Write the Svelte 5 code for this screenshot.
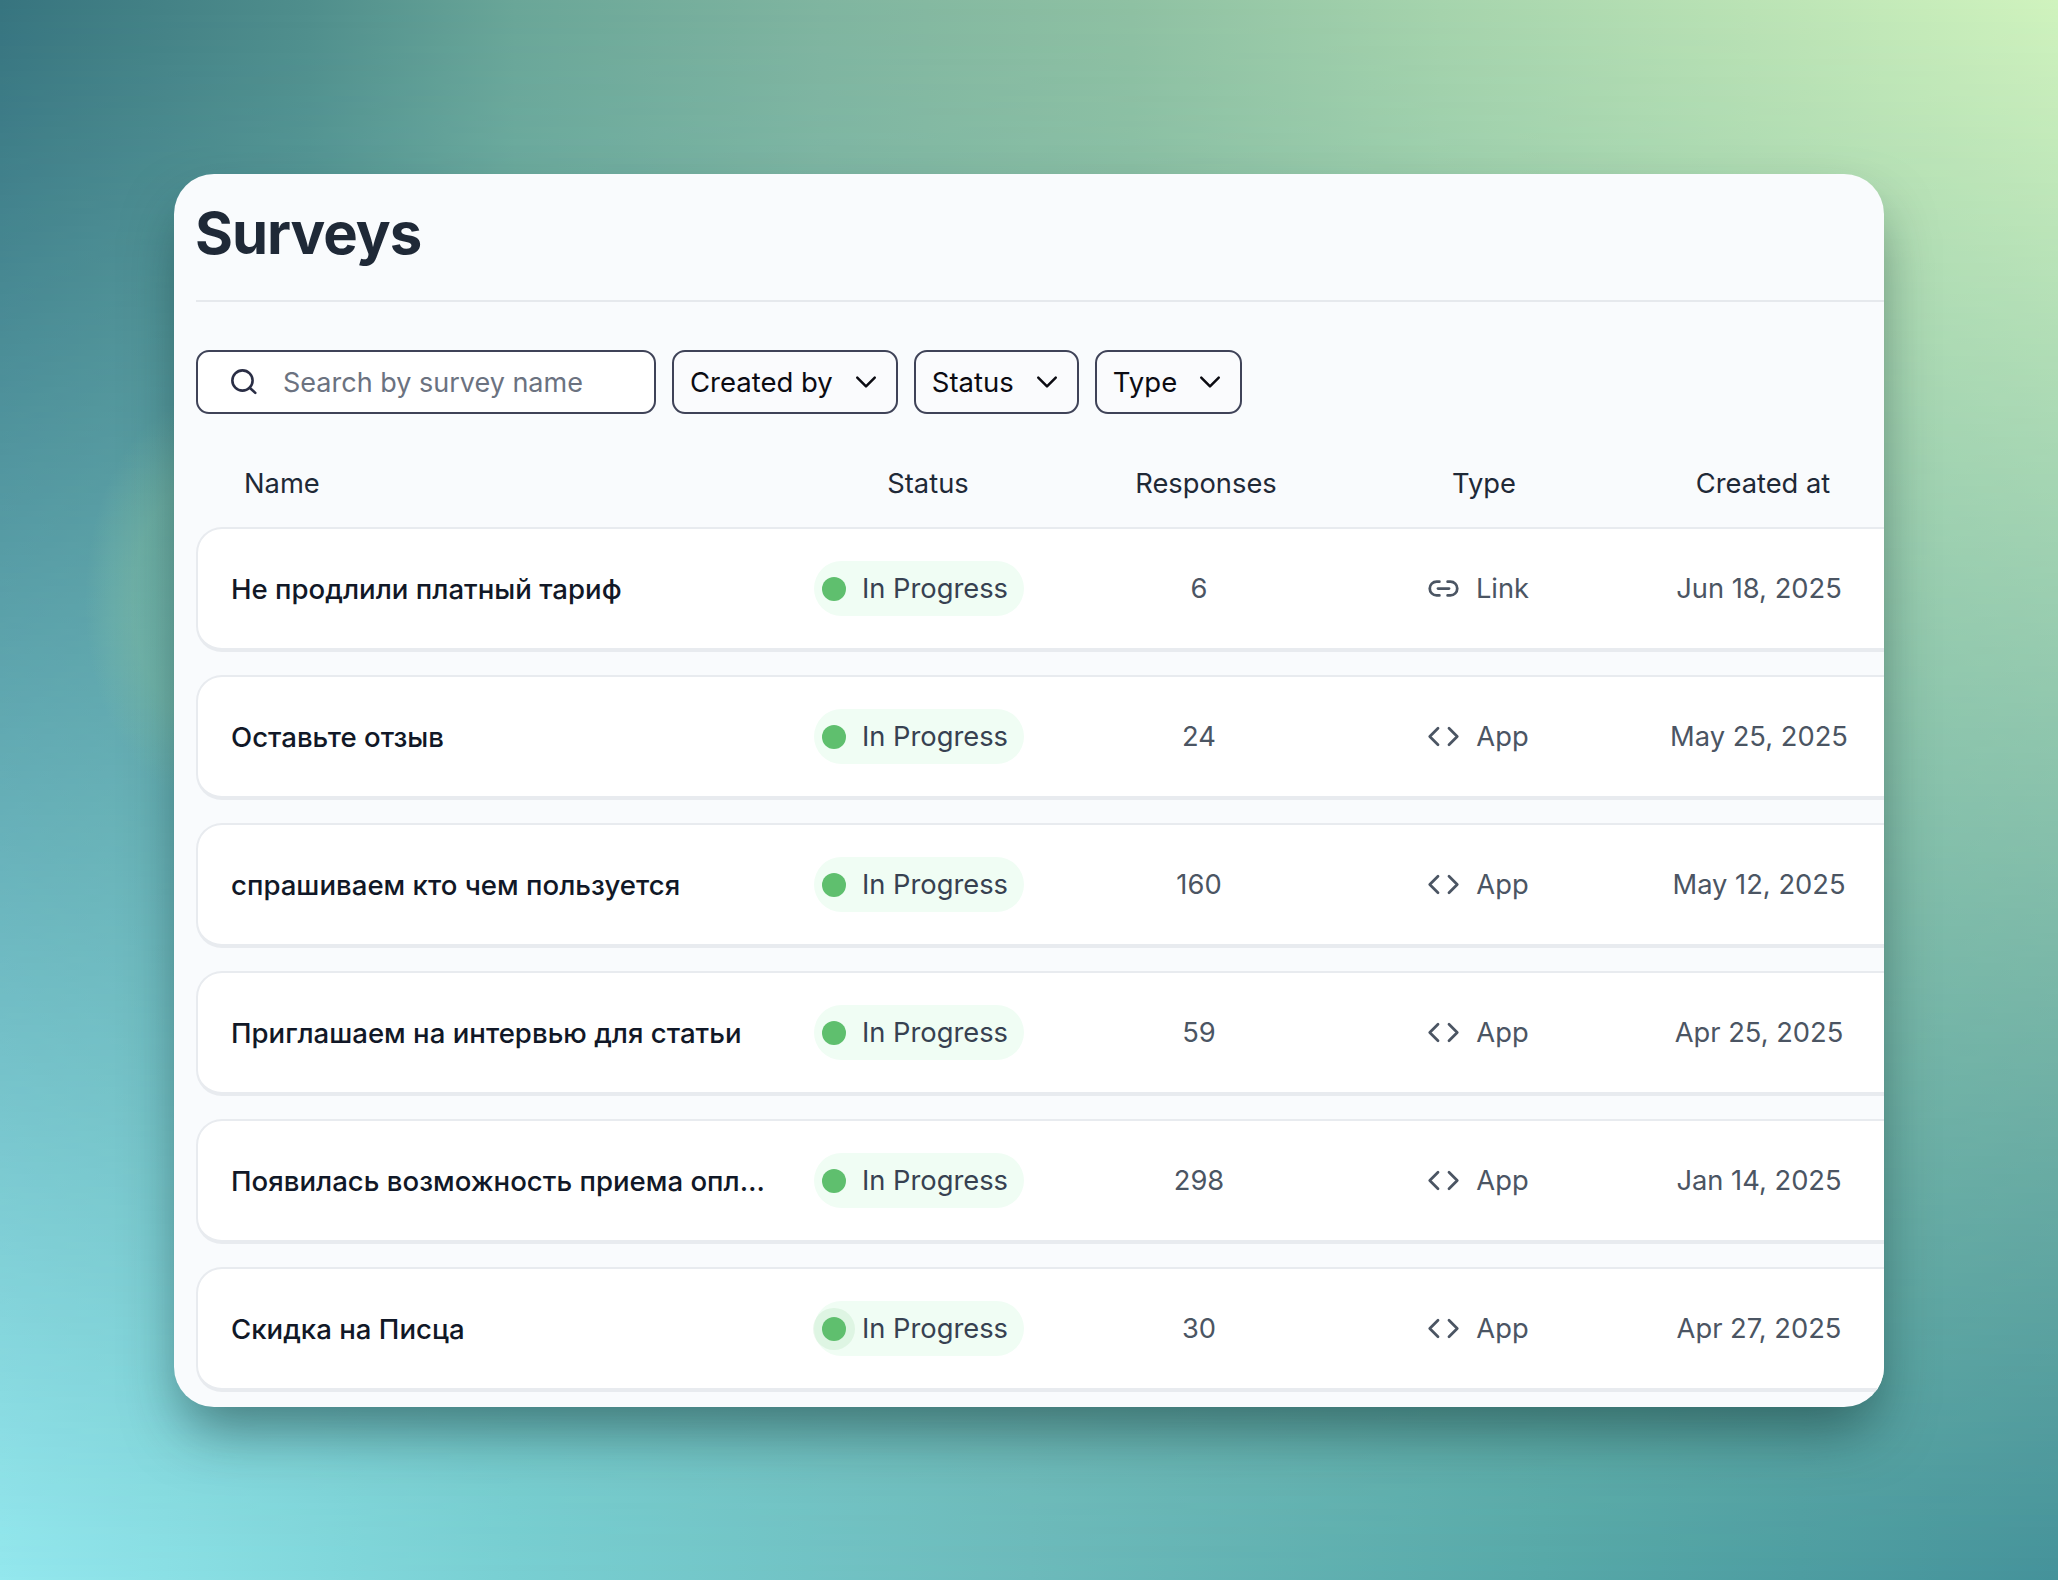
<script lang="ts">
	const rows = [
		{ name: 'Не продлили платный тариф', responses: 6, type: 'Link', date: 'Jun 18, 2025' },
		{ name: 'Оставьте отзыв', responses: 24, type: 'App', date: 'May 25, 2025' },
		{ name: 'спрашиваем кто чем пользуется', responses: 160, type: 'App', date: 'May 12, 2025' },
		{ name: 'Приглашаем на интервью для статьи', responses: 59, type: 'App', date: 'Apr 25, 2025' },
		{ name: 'Появилась возможность приема оплаты', responses: 298, type: 'App', date: 'Jan 14, 2025' },
		{ name: 'Скидка на Писца', responses: 30, type: 'App', date: 'Apr 27, 2025', hover: true }
	];
	const filters = ['Created by', 'Status', 'Type'];
</script>

<div class="page">
	<main class="card">
		<h1>Surveys</h1>
		<div class="rule"></div>

		<div class="filters">
			<label class="search">
				<svg viewBox="0 0 24 24" class="search-icon" aria-hidden="true">
					<circle cx="10.2" cy="10.2" r="9" />
					<path d="m16.6 16.6 5 4.6" />
				</svg>
				<span>Search by survey name</span>
			</label>
			{#each filters as f (f)}
				<button class="select">
					{f}
					<svg viewBox="0 0 24 24" aria-hidden="true"><path d="m5 8.5 7 7 7-7" /></svg>
				</button>
			{/each}
		</div>

		<div class="head">
			<span class="left">Name</span>
			<span>Status</span>
			<span>Responses</span>
			<span>Type</span>
			<span>Created at</span>
		</div>

		<div class="list">
			{#each rows as r (r.name)}
				<div class="row">
					<div class="name">{r.name}</div>
					<div class="cell">
						<span class="badge">
							<i class="dot" class:halo={r.hover}></i>
							In Progress
						</span>
					</div>
					<div class="cell">{r.responses}</div>
					<div class="cell type">
						<svg viewBox="0 0 24 24" aria-hidden="true">
							{#if r.type === 'Link'}
								<path d="M9 17H7A5 5 0 0 1 7 7h2" />
								<path d="M15 7h2a5 5 0 1 1 0 10h-2" />
								<path d="M8 12h8" />
							{:else}
								<path d="m8 6-6 6 6 6" />
								<path d="m16 18 6-6-6-6" />
							{/if}
						</svg>
						{r.type}
					</div>
					<div class="cell">{r.date}</div>
				</div>
			{/each}
		</div>
	</main>
</div>

<style>
	:global(body) {
		margin: 0;
	}
	.page {
		position: relative;
		box-sizing: border-box;
		width: 2058px;
		height: 1580px;
		padding: 174px;
		font-family: Inter, 'Noto Sans', sans-serif;
		background: linear-gradient(
			90deg,
			#37747f 0%,
			#4f8e8c 15%,
			#6aa698 25%,
			#80b5a0 40%,
			#8fc1a3 55%,
			#a6d4ad 70%,
			#bbe3b5 85%,
			#d0f3be 100%
		);
	}
	/* lower half of the backdrop, faded in over the top gradient */
	.page::before {
		content: '';
		position: absolute;
		inset: 0;
		background: linear-gradient(90deg, #94e8ee 0%, #78cfd2 25%, #6cbabb 50%, #56a8a8 75%, #44929a 100%);
		mask-image: linear-gradient(180deg, transparent, #000);
	}
	/* soft green glow poking out on the left of the card */
	.page::after {
		content: '';
		position: absolute;
		left: 85px;
		top: 400px;
		width: 240px;
		height: 400px;
		border-radius: 50%;
		background: radial-gradient(closest-side, rgba(135, 195, 165, 0.42) 60%, transparent);
	}
	.card {
		position: relative;
		z-index: 1;
		box-sizing: border-box;
		width: 1710px;
		height: 1233px;
		padding: 0 0 0 22px;
		overflow: hidden;
		background: #f9fbfd;
		border-radius: 40px;
		box-shadow: 0 30px 56px -8px rgba(10, 40, 40, 0.5);
	}
	h1 {
		margin: 0;
		height: 126px;
		box-sizing: border-box;
		padding-top: 18px;
		margin-left: -1px;
		font-size: 58px;
		line-height: 82px;
		font-weight: 700;
		letter-spacing: -1px;
		color: #1f2937;
	}
	.rule {
		height: 2px;
		background: #e6e9ed;
	}
	.filters {
		display: flex;
		gap: 16px;
		margin-top: 48px;
	}
	.search,
	.select {
		display: flex;
		align-items: center;
		box-sizing: border-box;
		height: 64px;
		border: 2px solid #3f4358;
		border-radius: 13px;
		font: inherit;
		font-size: 27.5px;
		color: #0b0b12;
	}
	.search {
		width: 460px;
		padding-left: 33px;
		gap: 25px;
		font-size: 27px;
		background: #fff;
		color: #6b7280;
	}
	.search-icon {
		width: 27px;
		height: 27px;
		fill: none;
		stroke: #2a2e45;
		stroke-width: 2.3;
		stroke-linecap: round;
	}
	.select {
		gap: 18px;
		padding: 0 15px 0 16px;
		background: #fafbfd;
	}
	.select svg {
		width: 30px;
		height: 30px;
		fill: none;
		stroke: #0b0b12;
		stroke-width: 2;
		stroke-linecap: round;
		stroke-linejoin: round;
	}
	.head,
	.row {
		display: grid;
		align-items: center;
		font-size: 27.3px;
	}
	.head {
		grid-template-columns: 566px 236px 320px 236px 322px;
		box-sizing: border-box;
		height: 113px;
		padding: 26px 0 0 48px;
		color: #1f2937;
		text-align: center;
	}
	.left {
		text-align: left;
	}
	.list {
		display: flex;
		flex-direction: column;
		gap: 23px;
	}
	.row {
		grid-template-columns: 570px 236px 324px 234px 328px;
		box-sizing: border-box;
		flex: none;
		width: 1760px;
		height: 125px;
		padding-left: 33px;
		background: #fff;
		border: 2px solid #e8ebef;
		border-bottom-width: 4px;
		border-radius: 26px;
		color: #4b5563;
	}
	.name {
		max-width: 536px;
		overflow: hidden;
		white-space: nowrap;
		text-overflow: ellipsis;
		font-size: 27.6px;
		font-weight: 550;
		color: #111827;
	}
	.cell {
		display: flex;
		justify-content: center;
		align-items: center;
	}
	.badge {
		display: flex;
		align-items: center;
		gap: 16px;
		height: 55px;
		padding: 0 16px 0 8px;
		border-radius: 28px;
		background: #f0fdf4;
		color: #374151;
	}
	.dot {
		width: 24px;
		height: 24px;
		border-radius: 50%;
		background: #5fbf6e;
	}
	.halo {
		box-shadow: 0 0 0 9px rgba(95, 191, 110, 0.12);
	}
	.type {
		gap: 16px;
	}
	.type svg {
		width: 33px;
		height: 33px;
		fill: none;
		stroke: #4b5563;
		stroke-width: 2;
		stroke-linecap: round;
		stroke-linejoin: round;
	}
</style>
